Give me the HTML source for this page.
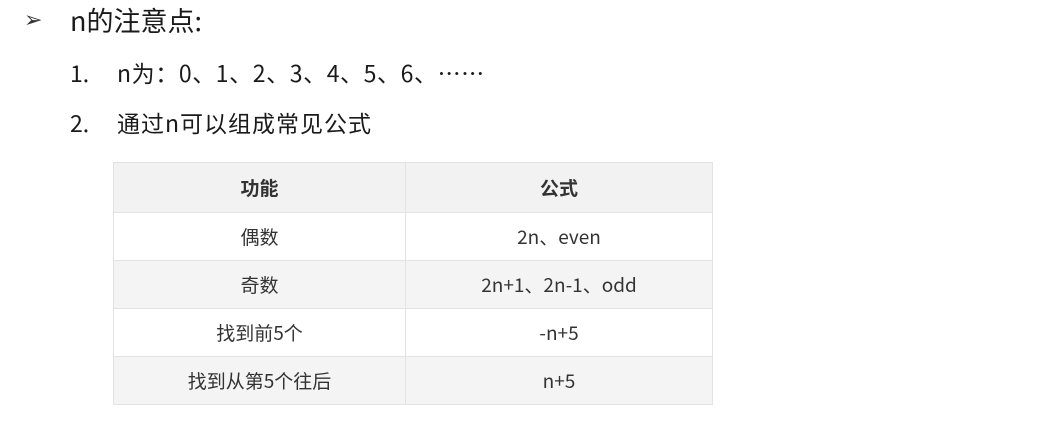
<!DOCTYPE html>
<html><head><meta charset="utf-8"><style>
body{margin:0;width:1054px;height:422px;background:#fff;font-family:"Noto Sans CJK SC","Liberation Sans",sans-serif;color:#1a1a1a;position:relative;overflow:hidden}
.t{position:absolute;white-space:nowrap;line-height:1}
table{position:absolute;left:113px;top:162px;border-collapse:collapse;table-layout:fixed;width:600px;font-size:19px;color:#333}
td{border:1px solid #e3e3e3;height:47px;text-align:center;padding:0;line-height:1}
tr:nth-child(odd) td{background:#f4f4f4}
tr:nth-child(even) td{background:#fff}
th{border:1px solid #e3e3e3;height:47px;background:#f2f2f2;font-weight:bold;font-size:19px;line-height:1}
</style></head><body>
<div class="t" style="left:24px;top:10px;font-size:22px;color:#333;font-family:'DejaVu Sans',sans-serif">➢</div>
<div class="t" style="left:70px;top:6px;font-size:27px">n的注意点:</div>
<div class="t" style="left:70px;top:61px;font-size:23px">1.</div>
<div class="t" style="left:117px;top:61px;font-size:23px;letter-spacing:0.6px">n为：0、1、2、3、4、5、6、……</div>
<div class="t" style="left:70px;top:111px;font-size:23px">2.</div>
<div class="t" style="left:117px;top:111px;font-size:23px;letter-spacing:1px">通过n可以组成常见公式</div>
<table>
<tr><th style="width:289px">功能</th><th>公式</th></tr>
<tr><td>偶数</td><td>2n、even</td></tr>
<tr><td>奇数</td><td>2n+1、2n-1、odd</td></tr>
<tr><td>找到前5个</td><td>-n+5</td></tr>
<tr><td>找到从第5个往后</td><td>n+5</td></tr>
</table>
</body></html>
